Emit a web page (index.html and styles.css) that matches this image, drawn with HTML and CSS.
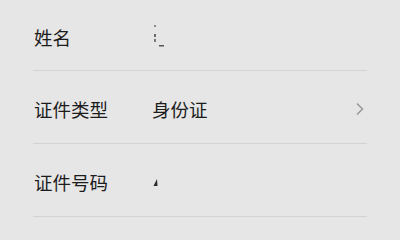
FILE: index.html
```html
<!DOCTYPE html>
<html lang="zh-CN">
<head>
<meta charset="utf-8">
<link rel="stylesheet" href="styles.css">
</head>
<body>
<div class="form">
  <div class="row">
    <span class="label">姓名</span>
    <span class="value">
      <svg class="mark-name" width="12" height="22" viewBox="0 0 12 22"><rect x="1" y="0" width="2" height="2" fill="#8a8a8a"/><rect x="1" y="9" width="2" height="3" fill="#6a6a6a"/><rect x="1" y="14" width="2" height="3" fill="#7a7a7a"/><rect x="6" y="20" width="5" height="1.5" fill="#555"/></svg>
    </span>
  </div>
  <div class="row">
    <span class="label">证件类型</span>
    <span class="value">身份证</span>
    <svg class="chevron" width="10" height="14" viewBox="0 0 10 14"><path d="M2 1.5 L7.5 7 L2 12.5" fill="none" stroke="#9a9a9a" stroke-width="1.6"/></svg>
  </div>
  <div class="row">
    <span class="label">证件号码</span>
    <span class="value">
      <svg class="mark-id" width="6" height="8" viewBox="0 0 6 8"><path d="M4 0 L4.5 7 L0.5 7 Z" fill="#2a2a2a"/></svg>
    </span>
  </div>
</div>
</body>
</html>
```

FILE: styles.css
```css
html, body {
  margin: 0;
  padding: 0;
  background: #e6e6e6;
  width: 400px;
  height: 240px;
  overflow: hidden;
}
body {
  font-family: "Noto Sans CJK SC", "Noto Sans", sans-serif;
  color: #1c1c1c;
}
.form {
  margin: 0 33px;
  display: flex;
  flex-direction: column;
}
.row {
  box-sizing: border-box;
  height: 73px;
  padding: 4px 2px 0 1px;
  border-bottom: 1px solid #d3d3d3;
  display: flex;
  align-items: center;
  font-size: 18.5px;
}
.row:first-child {
  height: 71px;
  padding-top: 3px;
}
.label {
  width: 118px;
  flex: none;
}
.value {
  flex: 1;
  display: flex;
  align-items: center;
}
.chevron {
  flex: none;
}
.mark-name {
  margin-left: 1px;
  position: relative;
  top: -1px;
}
.mark-id {
  margin-left: 1px;
  position: relative;
  top: 1px;
}
```
